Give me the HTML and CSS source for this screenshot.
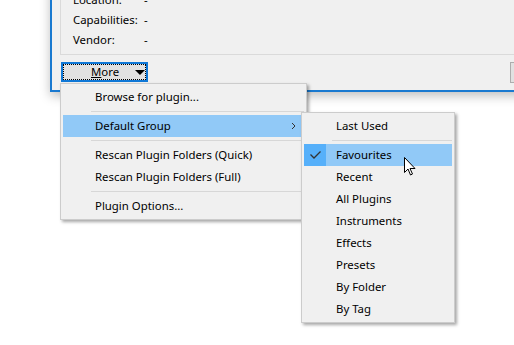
FILE: index.html
```html
<!DOCTYPE html>
<html lang="en">
<head>
<meta charset="UTF-8">
<title>Plugin Browser - More menu</title>
<link rel="stylesheet" href="styles.css">
</head>
<body>
<div class="window">
  <div class="info">
    <div class="row"><span class="label">Location:</span><span>-</span></div>
    <div class="row"><span class="label">Capabilities:</span><span>-</span></div>
    <div class="row"><span class="label">Vendor:</span><span>-</span></div>
  </div>
  <div class="footer">
    <div class="more-btn"><div class="focus"><span class="more-text"><u>M</u>ore</span><span class="tri"></span></div></div>
    <div class="side-btn"></div>
  </div>
</div>

<div class="menu main-menu">
  <div class="item">Browse for plugin...</div>
  <div class="sep"></div>
  <div class="item hot">Default Group
    <svg class="chev" width="5" height="8" viewBox="0 0 5 8"><path d="M1 1l3 3-3 3" fill="none" stroke="#333" stroke-width="1"/></svg>
  </div>
  <div class="sep"></div>
  <div class="item">Rescan Plugin Folders (Quick)</div>
  <div class="item">Rescan Plugin Folders (Full)</div>
  <div class="sep"></div>
  <div class="item">Plugin Options...</div>
</div>

<div class="menu sub-menu">
  <div class="item">Last Used</div>
  <div class="sep"></div>
  <div class="item hot checked"><span class="gutter"><svg width="11" height="8" viewBox="0 0 11 8"><path d="M0.5 3.5l3.5 3.5 6.5-6.5" fill="none" stroke="#333" stroke-width="1.3"/></svg></span>Favourites</div>
  <div class="item">Recent</div>
  <div class="item">All Plugins</div>
  <div class="item">Instruments</div>
  <div class="item">Effects</div>
  <div class="item">Presets</div>
  <div class="item">By Folder</div>
  <div class="item">By Tag</div>
</div>

<svg class="cursor" width="13" height="20" viewBox="0 0 13 20">
  <path d="M0.5 0.5v15l3.5-3.5 2.5 6 2-1-2.5-5.5h5z" fill="#fff" stroke="#000" stroke-width="1"/>
</svg>
</body>
</html>
```
FILE: styles.css
```css
body{margin:0;background:#fff;font-family:"Noto Sans",Arial,sans-serif;font-size:11.4px;color:#000;overflow:hidden;width:514px;height:345px;position:relative}
.window{position:absolute;left:50px;top:-40px;width:500px;height:128px;background:#f0f0f0;border:2px solid #1979d0;box-shadow:0 4px 10px rgba(0,0,0,.25)}
.info{margin-left:8px;padding-top:28px;box-sizing:border-box;height:93px;border-left:1px solid #dadada;border-bottom:1px solid #dadada}
.row{height:20px;line-height:20px;padding-left:12px;display:flex}
.label{width:71px}
.footer{display:flex;align-items:flex-start;margin-top:7px;padding-left:9px}
.more-btn{width:88px;height:20px;box-sizing:border-box;border:2px solid #0f78d7;background:#e1e1e1;display:flex}
.focus{flex:1;border:1px dotted #000;display:flex;align-items:center;padding-left:27px}
.more-text{width:41px;line-height:14px}
.tri{width:0;height:0;border-left:5px solid transparent;border-right:5px solid transparent;border-top:5px solid #000;margin-top:1px;margin-left:3px}
.side-btn{margin-left:362px;width:80px;height:21px;box-sizing:border-box;border:1px solid #adadad;background:#e1e1e1}
.menu{position:absolute;background:#f0f0f0;border:1px solid #cccccc;padding:2px;box-shadow:2px 2px 3px rgba(0,0,0,.35)}
.main-menu{left:60px;top:83px;width:241px}
.sub-menu{left:301px;top:112px;width:148px}
.item{height:22px;line-height:22px;padding-left:32px;position:relative;white-space:nowrap}
.sep{height:1px;background:#d7d7d7;margin:3px 0 3px 28px}
.hot{background:#91c9f7}
.chev{position:absolute;right:8px;top:7px}
.checked{padding-left:10px;display:flex}
.gutter{width:22px;margin-left:-10px;margin-right:10px;background:#56b0fa;display:flex;align-items:center;justify-content:center}
.cursor{position:absolute;left:404px;top:157px}
```
